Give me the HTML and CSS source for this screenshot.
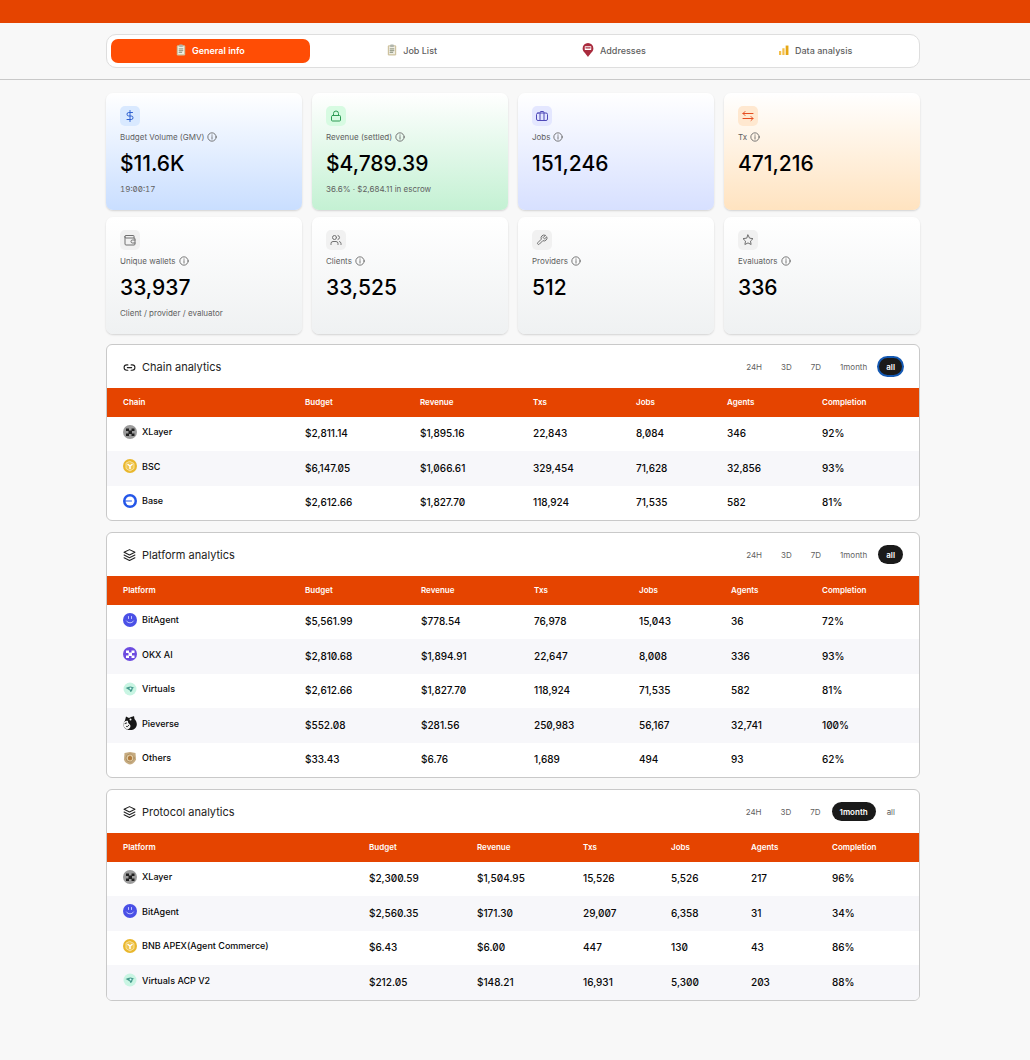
FILE: index.html
```html
<!DOCTYPE html>
<html lang="en">
<head>
    <meta charset="UTF-8">
    <meta name="viewport" content="width=device-width, initial-scale=1.0">
    <title>General info</title>
    <link rel="stylesheet" href="styles.css">
</head>
<body>
    <svg class="sprite" aria-hidden="true">
        <symbol id="info" viewBox="0 0 24 24"><circle cx="12" cy="12" r="10"/><path d="M12 11v6M12 7v1"/></symbol>
        <symbol id="dollar" viewBox="0 0 24 24"><path d="M12 1v22M17 5H9.500a3.500 3.500 0 0 0 0 7h5a3.500 3.500 0 0 1 0 7H6"/></symbol>
        <symbol id="lock" viewBox="0 0 24 24"><rect x="3" y="11" width="18" height="11" rx="2"/><path d="M7 11V7a5 5 0 0 1 10 0v4"/></symbol>
        <symbol id="briefcase" viewBox="0 0 24 24"><rect x="1" y="6" width="22" height="15" rx="3"/><path d="M8 21V5a2 2 0 0 1 2-2h4a2 2 0 0 1 2 2v16"/></symbol>
        <symbol id="swap" viewBox="0 0 24 24"><path d="M22 7H2M6 3L2 7l4 4M2 17h20M18 13l4 4-4 4"/></symbol>
        <symbol id="wallet" viewBox="0 0 24 24"><path d="M20 8V4a1 1 0 0 0-1-1H4a2 2 0 0 0 0 5h16a2 2 0 0 1 2 2v10a2 2 0 0 1-2 2H4a2 2 0 0 1-2-2V5"/><path d="M22 12h-5a3 3 0 0 0 0 6h5"/></symbol>
        <symbol id="users" viewBox="0 0 24 24"><path d="M16 21v-2a4 4 0 0 0-4-4H6a4 4 0 0 0-4 4v2"/><circle cx="9" cy="7" r="4"/><path d="M22 21v-2a4 4 0 0 0-3-3.900M16 3.100a4 4 0 0 1 0 7.800"/></symbol>
        <symbol id="wrench" viewBox="0 0 24 24"><path d="M14.700 6.300a1 1 0 0 0 0 1.400l1.600 1.600a1 1 0 0 0 1.400 0l3.800-3.800a6 6 0 0 1-7.900 7.900l-6.900 6.900a2.100 2.100 0 0 1-3-3l6.900-6.900a6 6 0 0 1 7.900-7.900z"/></symbol>
        <symbol id="star" viewBox="0 0 24 24"><path d="M12 2l3.100 6.300 6.900 1-5 4.900 1.200 6.800-6.200-3.200L5.800 21 7 14.200 2 9.300l6.900-1z"/></symbol>
        <symbol id="link" viewBox="0 0 24 24"><path d="M9 19H7A5 5 0 0 1 7 9h2M15 9h2a5 5 0 0 1 0 10h-2M8 14h8"/></symbol>
        <symbol id="layers" viewBox="0 0 24 24"><path d="M12 3l10 5-10 5L2 8zM2 13l10 5 10-5M2 18l10 5 10-5"/></symbol>
        <symbol id="clipboard" viewBox="0 0 16 20">
            <rect x="1" y="2" width="14" height="17" rx="2" fill="#cfc3a0"/>
            <rect x="3" y="4" width="10" height="13" fill="#efede2"/>
            <rect x="5" y="1" width="6" height="4" rx="1" fill="#b0b5ac"/>
            <path d="M5 8h6M5 11h6M5 14h4" stroke="#9da28f"/>
        </symbol>
        <symbol id="pin" viewBox="0 0 20 26">
            <path d="M10 0a10 10 0 0 1 10 10c0 6-6 9-10 16C6 19 0 16 0 10A10 10 0 0 1 10 0z" fill="#a92b3d"/>
            <rect x="4" y="6" width="12" height="7" rx="1" fill="#fff"/>
            <path d="M6 9h2M9 9h2M12 9h2" stroke="#a92b3d" stroke-width="2"/>
        </symbol>
        <symbol id="bars" viewBox="0 0 18 18">
            <path d="M0 11h4v7H0zM6 6h4v12H6z" fill="#f4bf4a"/>
            <path d="M12 1h5v17h-5z" fill="#e5a613"/>
        </symbol>
        <symbol id="xlayer" viewBox="0 0 28 28">
            <circle cx="14" cy="14" r="14" fill="#9b9b9b"/>
            <path d="M6 7h6v5H6zM17 7h6v5h-6zM11 11h7v7h-7zM6 17h6v5H6zM17 17h6v5h-6z" fill="#202020"/>
        </symbol>
        <symbol id="bnb" viewBox="0 0 28 28">
            <circle cx="14" cy="14" r="14" fill="#e9b72c"/>
            <path d="M14 5l8 4v10l-8 5-8-5V9z" fill="#f0c64f" stroke="#fbeec4" stroke-width="1.500"/>
            <path d="M10 11l4 3 4-3M14 14v5" fill="none" stroke="#fff" stroke-width="3"/>
        </symbol>
        <symbol id="base" viewBox="0 0 28 28">
            <circle cx="14" cy="14" r="14" fill="#2456e8"/>
            <circle cx="14" cy="14" r="9" fill="#fff"/>
            <path d="M4 14h13" stroke="#2456e8" stroke-width="2"/>
        </symbol>
        <symbol id="bitagent" viewBox="0 0 28 28">
            <circle cx="14" cy="14" r="14" fill="#4a50e6"/>
            <path d="M11 7v4M17 7v4M7 16c3 5 11 5 14 0" fill="none" stroke="#c3c8ff" stroke-width="2"/>
        </symbol>
        <symbol id="okx" viewBox="0 0 28 28">
            <circle cx="14" cy="14" r="14" fill="#6c4be0"/>
            <path d="M6 7h6v5H6zM17 7h6v5h-6zM11 11h7v7h-7zM6 17h6v5H6zM17 17h6v5h-6z" fill="#fff"/>
        </symbol>
        <symbol id="virtuals" viewBox="0 0 28 28">
            <circle cx="14" cy="14" r="13" fill="#c9f5e3"/>
            <path d="M5 12c4-1 6-3 10-3 3 0 5 2 8 3-3 0-4 1-4 3s-2 5-5 5c1-2 0-3-2-4s-4-3-7-4z" fill="#469b8c"/>
            <circle cx="15" cy="13" r="2" fill="#dff"/>
        </symbol>
        <symbol id="pieverse" viewBox="0 0 28 28">
            <path d="M4 9L6 1l6 3c4-2 8-3 10-4l1 6c7 7 6 17-2 21-7 3-16 1-19-5-2-4-1-9 2-13z" fill="#161616"/>
            <path d="M1 14c2-4 6-5 9-4-1 5 5 6 5 10 0 4-3 6-6 7C3 25 0 20 1 14z" fill="#f3f3f3"/>
            <path d="M4 15l3-1M7 21c2 1 3 0 4-2" fill="none" stroke="#161616" stroke-width="2"/>
            <circle cx="15" cy="7" r="2" fill="#fff"/>
        </symbol>
        <symbol id="others" viewBox="0 0 28 28">
            <path d="M3 4l11-2 11 2 1 13c-2 6-7 9-12 10C8 26 3 22 2 17z" fill="#c6ab80"/>
            <circle cx="14" cy="14" r="8" fill="#dfc9a0" stroke="#a0845a" stroke-width="1.500"/>
            <path d="M14 9l4 3v5l-4 2-4-2v-5z" fill="#b17b3d"/>
        </symbol>
    </svg>

    <div class="top-bar"></div>
    <header class="nav-wrap">
        <nav class="tabs">
            <button type="button" class="tab active"><svg class="emoji"><use href="#clipboard"/></svg>General info</button>
            <button type="button" class="tab"><svg class="emoji"><use href="#clipboard"/></svg>Job List</button>
            <button type="button" class="tab"><svg class="emoji pin"><use href="#pin"/></svg>Addresses</button>
            <button type="button" class="tab"><svg class="emoji"><use href="#bars"/></svg>Data analysis</button>
        </nav>
    </header>

    <main class="container">
        <section class="stats">
            <div class="card blue">
                <span class="card-icon"><svg><use href="#dollar"/></svg></span>
                <div class="card-label">Budget Volume (GMV) <svg><use href="#info"/></svg></div>
                <div class="card-value">$11.6K</div>
                <div class="card-note time">19:00:17</div>
            </div>
            <div class="card green">
                <span class="card-icon"><svg><use href="#lock"/></svg></span>
                <div class="card-label">Revenue (settled) <svg><use href="#info"/></svg></div>
                <div class="card-value">$4,789.39</div>
                <div class="card-note">36.6% · $2,684.11 in escrow</div>
            </div>
            <div class="card indigo">
                <span class="card-icon"><svg><use href="#briefcase"/></svg></span>
                <div class="card-label">Jobs <svg><use href="#info"/></svg></div>
                <div class="card-value">151,246</div>
            </div>
            <div class="card orange">
                <span class="card-icon"><svg><use href="#swap"/></svg></span>
                <div class="card-label">Tx <svg><use href="#info"/></svg></div>
                <div class="card-value">471,216</div>
            </div>
            <div class="card">
                <span class="card-icon"><svg><use href="#wallet"/></svg></span>
                <div class="card-label">Unique wallets <svg><use href="#info"/></svg></div>
                <div class="card-value">33,937</div>
                <div class="card-note">Client / provider / evaluator</div>
            </div>
            <div class="card">
                <span class="card-icon"><svg><use href="#users"/></svg></span>
                <div class="card-label">Clients <svg><use href="#info"/></svg></div>
                <div class="card-value">33,525</div>
            </div>
            <div class="card">
                <span class="card-icon"><svg><use href="#wrench"/></svg></span>
                <div class="card-label">Providers <svg><use href="#info"/></svg></div>
                <div class="card-value">512</div>
            </div>
            <div class="card">
                <span class="card-icon"><svg><use href="#star"/></svg></span>
                <div class="card-label">Evaluators <svg><use href="#info"/></svg></div>
                <div class="card-value">336</div>
            </div>
        </section>

        <section class="panel">
            <div class="panel-head">
                <h2><svg><use href="#link"/></svg>Chain analytics</h2>
                <div class="filters">
                    <button type="button">24H</button>
                    <button type="button">3D</button>
                    <button type="button">7D</button>
                    <button type="button">1month</button>
                    <button type="button" class="selected focused">all</button>
                </div>
            </div>
            <table class="chain-table">
                <colgroup><col><col class="c-budget"><col class="c-revenue"><col class="c-txs"><col class="c-jobs"><col class="c-agents"><col class="c-completion"></colgroup>
                <thead>
                    <tr><th>Chain</th><th>Budget</th><th>Revenue</th><th>Txs</th><th>Jobs</th><th>Agents</th><th>Completion</th></tr>
                </thead>
                <tbody>
                    <tr><td><span class="name"><svg><use href="#xlayer"/></svg>XLayer</span></td><td>$2,811.14</td><td>$1,895.16</td><td>22,843</td><td>8,084</td><td>346</td><td>92%</td></tr>
                    <tr><td><span class="name"><svg><use href="#bnb"/></svg>BSC</span></td><td>$6,147.05</td><td>$1,066.61</td><td>329,454</td><td>71,628</td><td>32,856</td><td>93%</td></tr>
                    <tr><td><span class="name"><svg><use href="#base"/></svg>Base</span></td><td>$2,612.66</td><td>$1,827.70</td><td>118,924</td><td>71,535</td><td>582</td><td>81%</td></tr>
                </tbody>
            </table>
        </section>

        <section class="panel">
            <div class="panel-head">
                <h2><svg><use href="#layers"/></svg>Platform analytics</h2>
                <div class="filters">
                    <button type="button">24H</button>
                    <button type="button">3D</button>
                    <button type="button">7D</button>
                    <button type="button">1month</button>
                    <button type="button" class="selected">all</button>
                </div>
            </div>
            <table class="platform-table">
                <colgroup><col><col class="c-budget"><col class="c-revenue"><col class="c-txs"><col class="c-jobs"><col class="c-agents"><col class="c-completion"></colgroup>
                <thead>
                    <tr><th>Platform</th><th>Budget</th><th>Revenue</th><th>Txs</th><th>Jobs</th><th>Agents</th><th>Completion</th></tr>
                </thead>
                <tbody>
                    <tr><td><span class="name"><svg><use href="#bitagent"/></svg>BitAgent</span></td><td>$5,561.99</td><td>$778.54</td><td>76,978</td><td>15,043</td><td>36</td><td>72%</td></tr>
                    <tr><td><span class="name"><svg><use href="#okx"/></svg>OKX AI</span></td><td>$2,810.68</td><td>$1,894.91</td><td>22,647</td><td>8,008</td><td>336</td><td>93%</td></tr>
                    <tr><td><span class="name"><svg><use href="#virtuals"/></svg>Virtuals</span></td><td>$2,612.66</td><td>$1,827.70</td><td>118,924</td><td>71,535</td><td>582</td><td>81%</td></tr>
                    <tr><td><span class="name"><svg><use href="#pieverse"/></svg>Pieverse</span></td><td>$552.08</td><td>$281.56</td><td>250,983</td><td>56,167</td><td>32,741</td><td>100%</td></tr>
                    <tr><td><span class="name"><svg><use href="#others"/></svg>Others</span></td><td>$33.43</td><td>$6.76</td><td>1,689</td><td>494</td><td>93</td><td>62%</td></tr>
                </tbody>
            </table>
        </section>

        <section class="panel">
            <div class="panel-head">
                <h2><svg><use href="#layers"/></svg>Protocol analytics</h2>
                <div class="filters">
                    <button type="button">24H</button>
                    <button type="button">3D</button>
                    <button type="button">7D</button>
                    <button type="button" class="selected">1month</button>
                    <button type="button">all</button>
                </div>
            </div>
            <table class="protocol-table">
                <colgroup><col><col class="c-budget"><col class="c-revenue"><col class="c-txs"><col class="c-jobs"><col class="c-agents"><col class="c-completion"></colgroup>
                <thead>
                    <tr><th>Platform</th><th>Budget</th><th>Revenue</th><th>Txs</th><th>Jobs</th><th>Agents</th><th>Completion</th></tr>
                </thead>
                <tbody>
                    <tr><td><span class="name"><svg><use href="#xlayer"/></svg>XLayer</span></td><td>$2,300.59</td><td>$1,504.95</td><td>15,526</td><td>5,526</td><td>217</td><td>96%</td></tr>
                    <tr><td><span class="name"><svg><use href="#bitagent"/></svg>BitAgent</span></td><td>$2,560.35</td><td>$171.30</td><td>29,007</td><td>6,358</td><td>31</td><td>34%</td></tr>
                    <tr><td><span class="name"><svg><use href="#bnb"/></svg>BNB APEX(Agent Commerce)</span></td><td>$6.43</td><td>$6.00</td><td>447</td><td>130</td><td>43</td><td>86%</td></tr>
                    <tr><td><span class="name"><svg><use href="#virtuals"/></svg>Virtuals ACP V2</span></td><td>$212.05</td><td>$148.21</td><td>16,931</td><td>5,300</td><td>203</td><td>88%</td></tr>
                </tbody>
            </table>
        </section>
    </main>
</body>
</html>
```
FILE: styles.css
```css
:root {
    --bg-color: #f8f8f8;
    --primary-color: #e54400;
    --active-color: #ff4d05;
    --border-color: #c9c9c9;
    --text-color: #080808;
    --muted-color: #5f5f5f;
}

* {
    box-sizing: border-box;
}

body {
    margin: 0;
    min-height: 100vh;
    font-family: Inter, "Liberation Sans", sans-serif;
    font-size: 10px;
    background-color: var(--bg-color);
    color: var(--text-color);
}

button {
    font-family: inherit;
    border: none;
    background: none;
    cursor: pointer;
}

svg {
    fill: none;
    stroke: currentColor;
    stroke-width: 2;
    stroke-linecap: round;
    stroke-linejoin: round;
    flex-shrink: 0;
}

.sprite {
    display: none;
}

.top-bar {
    height: 23px;
    background-color: var(--primary-color);
}

.nav-wrap {
    padding: 11px 110px 11px 106px;
    border-bottom: 1px solid var(--border-color);
}

.tabs {
    display: grid;
    grid-template-columns: repeat(4, 1fr);
    gap: 3px;
    padding: 4px;
    background-color: #fff;
    border: 1px solid #dedede;
    border-radius: 10px;
}

.tab {
    display: flex;
    align-items: center;
    justify-content: center;
    gap: 6px;
    height: 24px;
    padding: 0 0 2px;
    border-radius: 7px;
    font-size: 9px;
    font-weight: 500;
    color: var(--muted-color);
}

.tab.active {
    background-color: var(--active-color);
    color: #fff;
    font-weight: 600;
}

.emoji {
    width: 10px;
    height: 12px;
    stroke: none;
}

.emoji.pin {
    width: 12px;
    height: 14px;
}

.container {
    padding: 13px 110px 58px 106px;
}

.stats {
    display: grid;
    grid-template-columns: repeat(4, 1fr);
    gap: 7px 10px;
    margin-bottom: 10px;
}

.card {
    height: 117px;
    padding: 13px 14px;
    border-radius: 7px;
    background: linear-gradient(#fff, #eff1f2);
    box-shadow: 0 1px 2px rgba(0, 0, 0, 0.15);
}

.card.blue { background: linear-gradient(#fff, #c9deff); }
.card.green { background: linear-gradient(#fff, #c4f1d3); }
.card.indigo { background: linear-gradient(#fff, #d7e0ff); }
.card.orange { background: linear-gradient(#fff, #ffe3c0); }

.card-icon {
    display: flex;
    align-items: center;
    justify-content: center;
    width: 20px;
    height: 20px;
    border-radius: 5px;
    background-color: #f1f1f1;
    color: #707070;
}

.card-icon svg {
    width: 12px;
    height: 12px;
}

.blue .card-icon { background-color: #d9e9ff; color: #2c5fd0; }
.green .card-icon { background-color: #d7fbe2; color: #2e9a54; }
.indigo .card-icon { background-color: #e4e7ff; color: #4e49b8; }
.orange .card-icon { background-color: #ffe8d0; color: #e64d20; }

.card-label {
    display: flex;
    align-items: center;
    gap: 3px;
    height: 12px;
    margin-top: 5px;
    font-size: 8px;
    color: var(--muted-color);
}

.card-label svg {
    width: 10px;
    height: 10px;
}

.card-value {
    margin-top: 6px;
    font-size: 21px;
    font-weight: 500;
    line-height: 30px;
    color: #000;
}

.card-note {
    margin-top: 4px;
    font-size: 8px;
    line-height: 12px;
    color: var(--muted-color);
}

.card-note.time {
    font-variant-numeric: slashed-zero tabular-nums;
}

.panel {
    margin-bottom: 11px;
    background-color: #fff;
    border: 1px solid var(--border-color);
    border-radius: 6px;
    overflow: hidden;
}

.panel-head {
    display: flex;
    align-items: center;
    justify-content: space-between;
    height: 43px;
    padding: 0 16px;
}

.panel-head h2 {
    display: flex;
    align-items: center;
    gap: 6px;
    margin: 0;
    font-size: 11px;
    font-weight: 400;
    color: #222;
}

.panel-head h2 svg {
    width: 13px;
    height: 13px;
}

.filters {
    display: flex;
    gap: 3px;
}

.filters button {
    height: 19px;
    padding: 0 8px;
    border-radius: 10px;
    font-size: 8px;
    color: var(--muted-color);
}

.filters .selected {
    background-color: #1a1a1a;
    color: #fff;
    font-weight: 600;
}

.filters .focused {
    outline: 2px solid #1459b3;
    outline-offset: -1px;
}

table {
    width: 100%;
    table-layout: fixed;
    border-collapse: collapse;
}

th, td {
    padding: 0 0 2px 16px;
    text-align: left;
    white-space: nowrap;
}

th {
    height: 29px;
    background-color: var(--primary-color);
    color: #fff;
    font-size: 8px;
    font-weight: 600;
}

td {
    height: 34px;
    font-weight: 500;
    font-variant-numeric: slashed-zero;
}

tbody tr:nth-child(even) td {
    height: 35px;
    background-color: #f7f7fa;
}

.name {
    display: flex;
    align-items: center;
    gap: 5px;
    padding-bottom: 3px;
    font-size: 9px;
}

.name svg {
    width: 14px;
    height: 14px;
    stroke: none;
}

/* column widths, the first column takes the rest */
.chain-table .c-budget { width: 115px; }
.chain-table .c-revenue { width: 113px; }
.chain-table .c-txs { width: 103px; }
.chain-table .c-jobs { width: 91px; }
.chain-table .c-agents { width: 95px; }
.chain-table .c-completion { width: 113px; }

.platform-table .c-budget { width: 116px; }
.platform-table .c-revenue { width: 113px; }
.platform-table .c-txs { width: 105px; }
.platform-table .c-jobs { width: 92px; }
.platform-table .c-agents { width: 91px; }
.platform-table .c-completion { width: 113px; }

.protocol-table .c-budget { width: 108px; }
.protocol-table .c-revenue { width: 106px; }
.protocol-table .c-txs { width: 88px; }
.protocol-table .c-jobs { width: 80px; }
.protocol-table .c-agents { width: 81px; }
.protocol-table .c-completion { width: 103px; }
```
